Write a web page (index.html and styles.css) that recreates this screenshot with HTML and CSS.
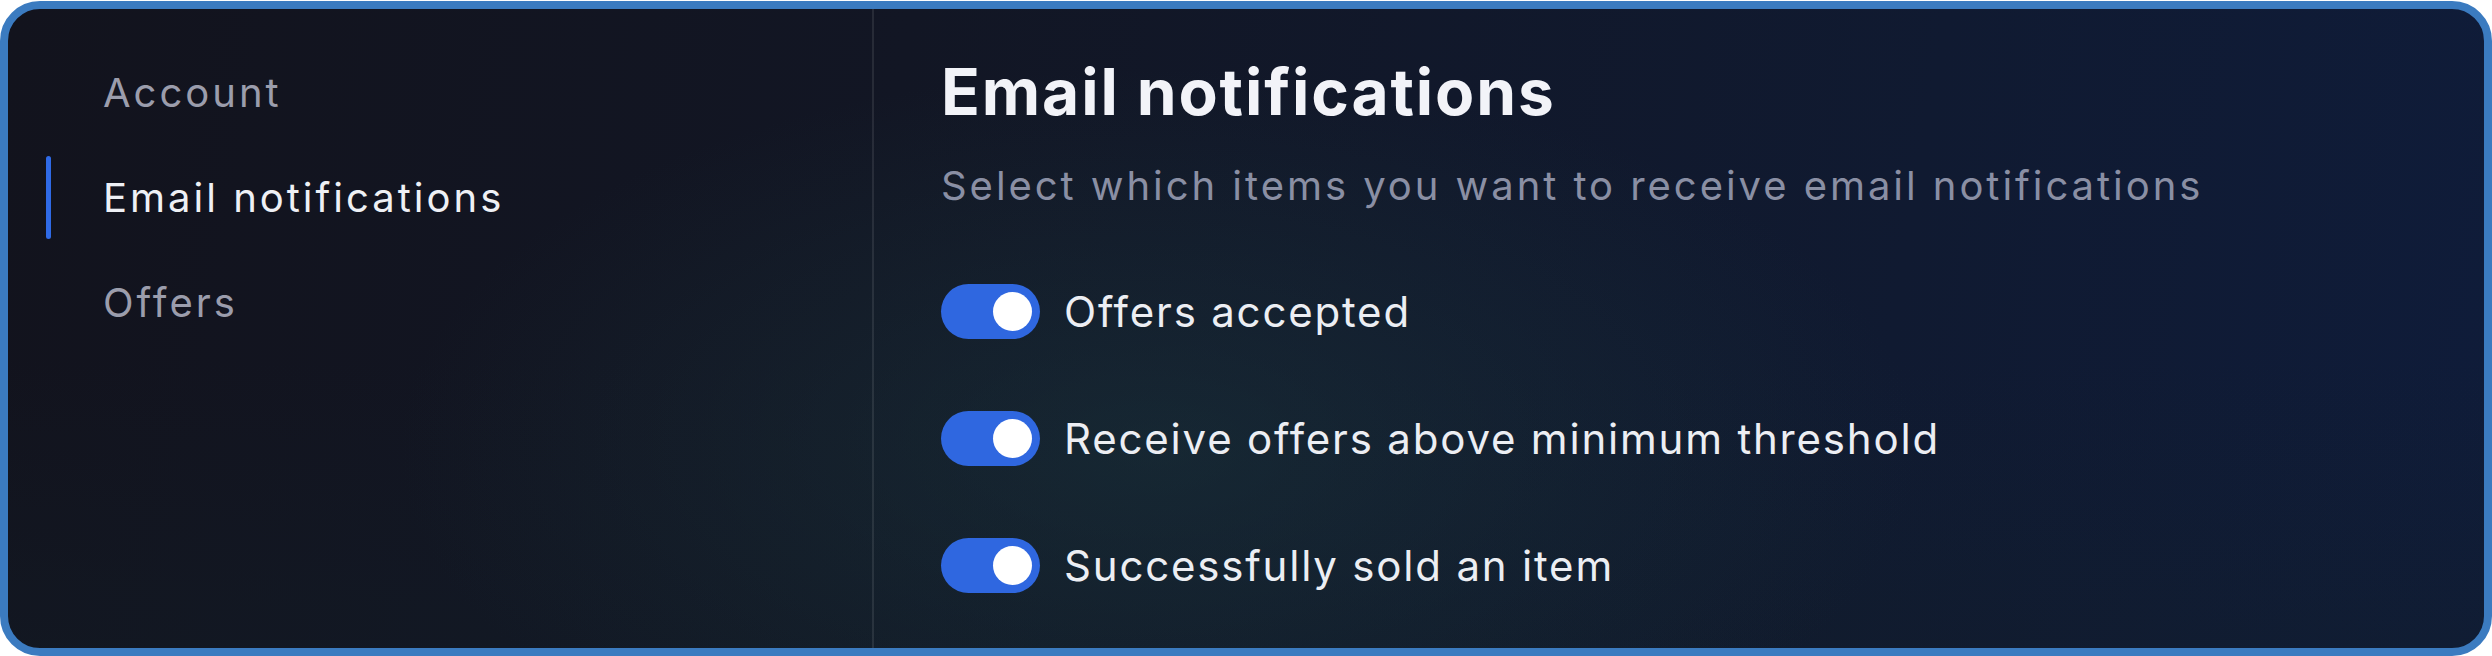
FILE: index.html
```html
<!DOCTYPE html>
<html>
<head>
    <title>Settings</title>
    <link rel="stylesheet" href="styles.css">
</head>
<body>
    <div class="frame">
        <nav class="sideNav">
            <a class="navItem"><span class="navMark"></span>Account</a>
            <a class="navItem active"><span class="navMark"></span>Email notifications</a>
            <a class="navItem"><span class="navMark"></span>Offers</a>
        </nav>

        <main class="panel">
            <h1 class="panelTitle">Email notifications</h1>
            <p class="panelHint">Select which items you want to receive email notifications</p>

            <div class="toggleList">
                <label class="toggleRow">
                    <span class="toggle on"><span class="knob"></span></span>
                    Offers accepted
                </label>
                <label class="toggleRow">
                    <span class="toggle on"><span class="knob"></span></span>
                    Receive offers above minimum threshold
                </label>
                <label class="toggleRow">
                    <span class="toggle on"><span class="knob"></span></span>
                    Successfully sold an item
                </label>
            </div>
        </main>
    </div>
</body>
</html>
```

FILE: styles.css
```css
body {
    margin: 0;
    background-color: #fff;
    font-family: Inter, "Noto Sans", sans-serif;
}

.frame {
    box-sizing: border-box;
    margin-top: 1px;
    height: 655px;
    border: 8px solid #3b7bc0;
    border-radius: 40px;
    overflow: hidden;
    display: grid;
    grid-template-columns: 866px 1fr;
    background:
        radial-gradient(ellipse 760px 380px at 1150px 440px, rgba(28, 58, 64, 0.45), transparent),
        linear-gradient(180deg, rgba(0, 0, 0, 0) 55%, rgba(18, 30, 40, 0.35) 100%),
        linear-gradient(100deg, #12131d 0%, #121624 35%, #101a31 75%, #0f1c3a 100%);
}

.sideNav {
    display: flex;
    flex-direction: column;
    gap: 22px;
    padding-top: 42px;
    padding-left: 38px;
    border-right: 2px solid rgba(255, 255, 255, 0.09);
}

    .navItem {
        display: flex;
        align-items: center;
        height: 83px;
        font-size: 40px;
        line-height: 48px;
        letter-spacing: 3px;
        color: #9b9dac;
        cursor: pointer;
    }

        .navMark {
            width: 5px;
            height: 83px;
            margin-right: 52px;
            border-radius: 3px;
            background-color: transparent;
        }

    .navItem.active {
        color: #eef0f5;
    }

        .navItem.active .navMark {
            background-color: #2f6ae6;
        }

.panel {
    padding-top: 47px;
    padding-left: 67px;
}

.panelTitle {
    margin: 0;
    font-size: 64px;
    line-height: 72px;
    font-weight: 700;
    letter-spacing: 1.9px;
    color: #f2f3f8;
}

.panelHint {
    margin: 34px 0 0 0;
    font-size: 40px;
    line-height: 48px;
    letter-spacing: 2.95px;
    color: #8a8fa4;
}

.toggleList {
    display: flex;
    flex-direction: column;
    gap: 72px;
    margin-top: 74px;
}

.toggleRow {
    display: flex;
    align-items: center;
    gap: 24px;
    font-size: 42px;
    line-height: 55px;
    letter-spacing: 1.8px;
    color: #eceef3;
}

.toggle {
    box-sizing: border-box;
    display: flex;
    align-items: center;
    justify-content: flex-start;
    width: 99px;
    height: 55px;
    padding: 8px;
    border-radius: 28px;
    background-color: #3a3f4d;
}

    .toggle.on {
        justify-content: flex-end;
        background-color: #2f67e0;
    }

    .knob {
        width: 39px;
        height: 39px;
        border-radius: 50%;
        background-color: #fff;
    }
```
